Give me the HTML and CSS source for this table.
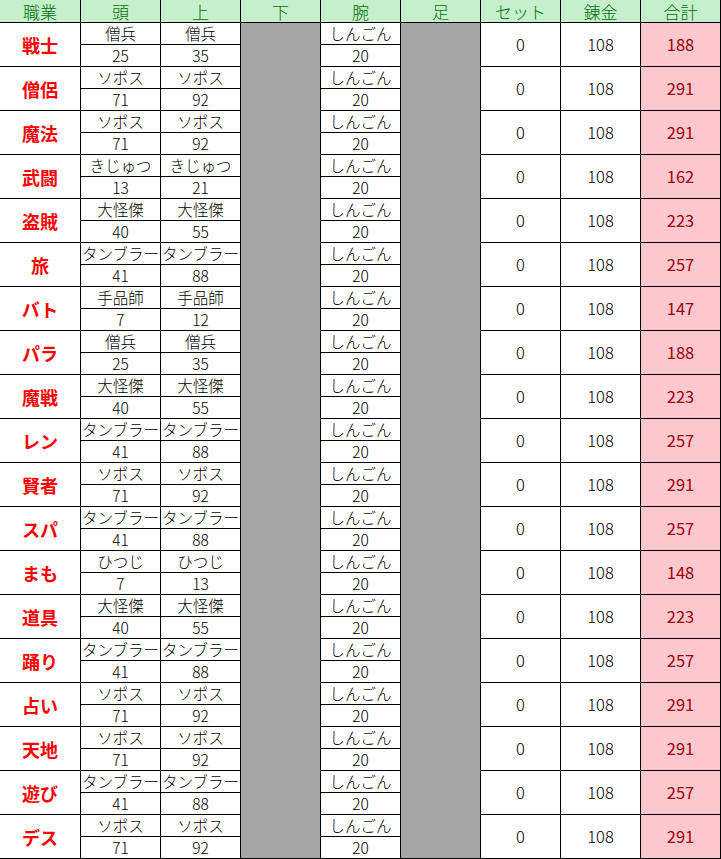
FILE: index.html
```html
<!DOCTYPE html>
<html lang="ja">
<head>
<meta charset="utf-8">
<title>装備表</title>
<link rel="stylesheet" href="styles.css">
</head>
<body>
<div class="sheet">
  <div class="h first">職業</div><div class="h">頭</div><div class="h">上</div><div class="h">下</div><div class="h">腕</div><div class="h">足</div><div class="h">セット</div><div class="h">錬金</div><div class="h">合計</div>

  <div class="job">戦士</div><div class="c">僧兵</div><div class="c">僧兵</div><div class="gray"></div><div class="c">しんごん</div><div class="gray"></div><div class="m">0</div><div class="m">108</div><div class="t">188</div><div class="c">25</div><div class="c">35</div><div class="c">20</div>

  <div class="job">僧侶</div><div class="c">ソポス</div><div class="c">ソポス</div><div class="gray"></div><div class="c">しんごん</div><div class="gray"></div><div class="m">0</div><div class="m">108</div><div class="t">291</div><div class="c">71</div><div class="c">92</div><div class="c">20</div>

  <div class="job">魔法</div><div class="c">ソポス</div><div class="c">ソポス</div><div class="gray"></div><div class="c">しんごん</div><div class="gray"></div><div class="m">0</div><div class="m">108</div><div class="t">291</div><div class="c">71</div><div class="c">92</div><div class="c">20</div>

  <div class="job">武闘</div><div class="c">きじゅつ</div><div class="c">きじゅつ</div><div class="gray"></div><div class="c">しんごん</div><div class="gray"></div><div class="m">0</div><div class="m">108</div><div class="t">162</div><div class="c">13</div><div class="c">21</div><div class="c">20</div>

  <div class="job">盗賊</div><div class="c">大怪傑</div><div class="c">大怪傑</div><div class="gray"></div><div class="c">しんごん</div><div class="gray"></div><div class="m">0</div><div class="m">108</div><div class="t">223</div><div class="c">40</div><div class="c">55</div><div class="c">20</div>

  <div class="job">旅</div><div class="c">タンブラー</div><div class="c">タンブラー</div><div class="gray"></div><div class="c">しんごん</div><div class="gray"></div><div class="m">0</div><div class="m">108</div><div class="t">257</div><div class="c">41</div><div class="c">88</div><div class="c">20</div>

  <div class="job">バト</div><div class="c">手品師</div><div class="c">手品師</div><div class="gray"></div><div class="c">しんごん</div><div class="gray"></div><div class="m">0</div><div class="m">108</div><div class="t">147</div><div class="c">7</div><div class="c">12</div><div class="c">20</div>

  <div class="job">パラ</div><div class="c">僧兵</div><div class="c">僧兵</div><div class="gray"></div><div class="c">しんごん</div><div class="gray"></div><div class="m">0</div><div class="m">108</div><div class="t">188</div><div class="c">25</div><div class="c">35</div><div class="c">20</div>

  <div class="job">魔戦</div><div class="c">大怪傑</div><div class="c">大怪傑</div><div class="gray"></div><div class="c">しんごん</div><div class="gray"></div><div class="m">0</div><div class="m">108</div><div class="t">223</div><div class="c">40</div><div class="c">55</div><div class="c">20</div>

  <div class="job">レン</div><div class="c">タンブラー</div><div class="c">タンブラー</div><div class="gray"></div><div class="c">しんごん</div><div class="gray"></div><div class="m">0</div><div class="m">108</div><div class="t">257</div><div class="c">41</div><div class="c">88</div><div class="c">20</div>

  <div class="job">賢者</div><div class="c">ソポス</div><div class="c">ソポス</div><div class="gray"></div><div class="c">しんごん</div><div class="gray"></div><div class="m">0</div><div class="m">108</div><div class="t">291</div><div class="c">71</div><div class="c">92</div><div class="c">20</div>

  <div class="job">スパ</div><div class="c">タンブラー</div><div class="c">タンブラー</div><div class="gray"></div><div class="c">しんごん</div><div class="gray"></div><div class="m">0</div><div class="m">108</div><div class="t">257</div><div class="c">41</div><div class="c">88</div><div class="c">20</div>

  <div class="job">まも</div><div class="c">ひつじ</div><div class="c">ひつじ</div><div class="gray"></div><div class="c">しんごん</div><div class="gray"></div><div class="m">0</div><div class="m">108</div><div class="t">148</div><div class="c">7</div><div class="c">13</div><div class="c">20</div>

  <div class="job">道具</div><div class="c">大怪傑</div><div class="c">大怪傑</div><div class="gray"></div><div class="c">しんごん</div><div class="gray"></div><div class="m">0</div><div class="m">108</div><div class="t">223</div><div class="c">40</div><div class="c">55</div><div class="c">20</div>

  <div class="job">踊り</div><div class="c">タンブラー</div><div class="c">タンブラー</div><div class="gray"></div><div class="c">しんごん</div><div class="gray"></div><div class="m">0</div><div class="m">108</div><div class="t">257</div><div class="c">41</div><div class="c">88</div><div class="c">20</div>

  <div class="job">占い</div><div class="c">ソポス</div><div class="c">ソポス</div><div class="gray"></div><div class="c">しんごん</div><div class="gray"></div><div class="m">0</div><div class="m">108</div><div class="t">291</div><div class="c">71</div><div class="c">92</div><div class="c">20</div>

  <div class="job">天地</div><div class="c">ソポス</div><div class="c">ソポス</div><div class="gray"></div><div class="c">しんごん</div><div class="gray"></div><div class="m">0</div><div class="m">108</div><div class="t">291</div><div class="c">71</div><div class="c">92</div><div class="c">20</div>

  <div class="job">遊び</div><div class="c">タンブラー</div><div class="c">タンブラー</div><div class="gray"></div><div class="c">しんごん</div><div class="gray"></div><div class="m">0</div><div class="m">108</div><div class="t">257</div><div class="c">41</div><div class="c">88</div><div class="c">20</div>

  <div class="job">デス</div><div class="c">ソポス</div><div class="c">ソポス</div><div class="gray last"></div><div class="c">しんごん</div><div class="gray last"></div><div class="m">0</div><div class="m">108</div><div class="t">291</div><div class="c">71</div><div class="c">92</div><div class="c">20</div>
</div>
</body>
</html>
```

FILE: styles.css
```css
* { box-sizing: border-box; }
html, body { margin: 0; padding: 0; background: #ffffff; }
body {
  font-family: "Noto Sans CJK JP", "Noto Sans", sans-serif;
  color: #000;
}
.sheet {
  display: grid;
  grid-template-columns: 81px repeat(8, 80px);
  grid-template-rows: 23px;
  grid-auto-rows: 22px;
  width: 721px;
}
.sheet > div {
  display: flex;
  align-items: center;
  justify-content: center;
  border-right: 1px solid #000;
  border-bottom: 1px solid #000;
  line-height: 1;
  white-space: nowrap;
  overflow: hidden;
}
.h {
  background: #c6efce;
  color: #007000;
  font-size: 17px;
  font-weight: 300;
}
.c {
  font-size: 15.5px;
  font-weight: 300;
}
.job {
  grid-row: span 2;
  color: #ff0000;
  font-weight: 700;
  font-size: 18px;
}
.gray {
  grid-row: span 2;
  background: #a6a6a6;
  border-bottom: none !important;
}
.gray.last { border-bottom: 1px solid #000 !important; }
.m {
  grid-row: span 2;
  font-size: 16.5px;
  font-weight: 300;
}
.t {
  grid-row: span 2;
  background: #ffc7ce;
  color: #9c0006;
  font-size: 16.5px;
  font-weight: 400;
}
```
